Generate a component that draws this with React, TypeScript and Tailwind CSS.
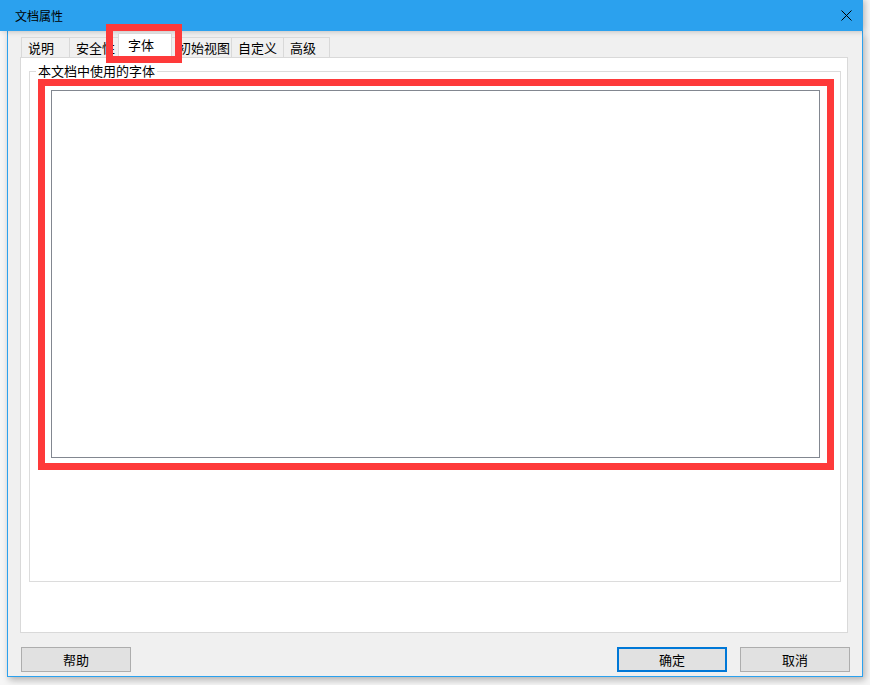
import React from "react";

const tabs = [
  { label: "说明", w: 49 },
  { label: "安全性", w: 50 },
  { label: "字体", w: 54, active: true },
  { label: "初始视图", w: 61 },
  { label: "自定义", w: 53 },
  { label: "高级", w: 47 },
];

export default function App() {
  return (
    <div
      className="relative w-[870px] h-[685px] overflow-hidden bg-[#f6f6f6] text-[13px] text-black"
      style={{ fontFamily: '"Noto Sans CJK SC", "Noto Sans", sans-serif' }}
    >
      {/* Title bar */}
      <div className="relative z-10 flex h-[31px] w-[863px] items-center justify-between bg-[#2ba1ee] pl-[15px] pr-[10px] shadow-[2px_0_6px_rgba(0,0,0,0.25)]">
        <span className="text-[12px] leading-none">文档属性</span>
        <svg width="11" height="11" viewBox="0 0 11 11" className="mr-[1px]">
          <path d="M0.5 0.5 L10.5 10.5 M10.5 0.5 L0.5 10.5" stroke="#000" strokeWidth="1" />
        </svg>
      </div>

      {/* Body */}
      <div className="ml-[7px] flex h-[646px] w-[856px] flex-col border-x border-b border-[#2ba1ee] bg-[#f0f0f0] shadow-[2px_3px_7px_rgba(0,0,0,0.28)]">
        {/* Tabs */}
        <div className="relative z-10 ml-[13px] mt-[2px] flex h-[24px] items-end">
          {tabs.map((t, i) =>
            t.active ? (
              <div
                key={t.label}
                className="relative z-20 -ml-px mb-[-1px] flex h-[25px] items-start justify-start border border-b-0 border-[#d9d9d9] bg-white pl-[9px] pt-[2px] leading-[17px]"
                style={{ width: t.w }}
              >
                {t.label}
              </div>
            ) : (
              <div
                key={t.label}
                className={`flex h-[20px] items-center justify-start border border-b-0 border-[#d9d9d9] bg-[#f0f0f0] pl-[6px] leading-[17px] ${i === 0 ? "" : "-ml-px"}`}
                style={{ width: t.w }}
              >
                {t.label}
              </div>
            )
          )}
        </div>

        {/* Panel */}
        <div className="ml-[12px] h-[576px] w-[828px] border border-[#d9d9d9] bg-white">
          <fieldset className="ml-[8px] mt-[5px] h-[519px] w-[812px] border border-[#dcdcdc]">
            <legend className="ml-[6px] px-[2px] leading-[16px]">本文档中使用的字体</legend>
            <div className="ml-[21px] mt-[11px] h-[368px] w-[769px] border border-[#828790] bg-white" />
          </fieldset>
        </div>

        {/* Buttons */}
        <div className="ml-[13px] mr-[12px] mt-[14px] flex items-center justify-between">
          <button className="flex h-[25px] w-[110px] items-center justify-center border border-[#adadad] bg-[#e1e1e1] leading-none">
            帮助
          </button>
          <div className="flex gap-[13px]">
            <button className="flex h-[25px] w-[110px] items-center justify-center border-2 border-[#0078d7] bg-[#e1e1e1] leading-none">
              确定
            </button>
            <button className="flex h-[25px] w-[110px] items-center justify-center border border-[#adadad] bg-[#e1e1e1] leading-none">
              取消
            </button>
          </div>
        </div>
      </div>

      {/* Annotation highlights */}
      <div className="pointer-events-none absolute left-[106px] top-[24px] z-30 h-[39px] w-[76px] border-[7px] border-[#fe3a3a]" />
      <div className="pointer-events-none absolute left-[38px] top-[79px] z-30 h-[391px] w-[796px] border-[7px] border-[#fe3a3a]" />
    </div>
  );
}
